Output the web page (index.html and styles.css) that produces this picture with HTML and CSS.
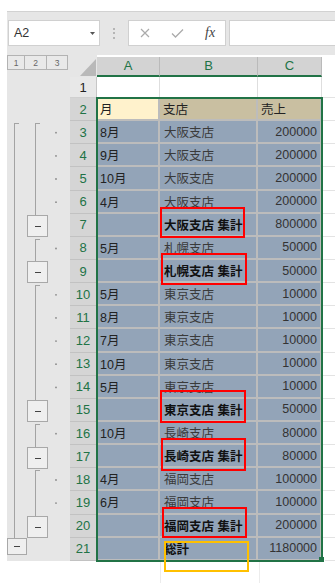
FILE: index.html
```html
<!DOCTYPE html>
<html lang="ja">
<head>
<meta charset="utf-8">
<title>Excel outline</title>
<link rel="stylesheet" href="styles.css">
</head>
<body>
<div class="window">
  <div class="fbar">
    <div class="namebox"><span>A2</span><svg class="caret" width="5" height="3" viewBox="0 0 5 3"><path d="M0 0H5L2.5 3Z" fill="#555"/></svg></div>
    <div class="grip"><i></i><i></i><i></i></div>
    <div class="fxbox">
      <svg class="ico-x" width="10" height="10" viewBox="0 0 10 10"><path d="M1 1L9 9M9 1L1 9" stroke="#ababab" stroke-width="1.2" fill="none"/></svg>
      <svg class="ico-ok" width="13" height="10" viewBox="0 0 13 10"><path d="M1 5.5L4.5 9L12 1.5" stroke="#ababab" stroke-width="1.3" fill="none"/></svg>
      <span class="fx">fx</span>
    </div>
    <div class="finput"></div>
  </div>
  <div class="sheet">
    <div class="outline">
      <div class="levels"><span class="lv1">1</span><span class="lv2">2</span><span class="lv3">3</span></div>
      <svg class="tree" width="63" height="484" viewBox="0 0 63 484">
        <g stroke="#a3a3a3" fill="none" shape-rendering="crispEdges">
          <path d="M12 46.5H7.5V462"/>
          <path d="M33 46.5H28.5V138.5"/>
          <path d="M33 162.5H28.5V184.5"/>
          <path d="M33 208.5H28.5V323.5"/>
          <path d="M33 347.5H28.5V370.5"/>
          <path d="M33 393.5H28.5V439.5"/>
        </g>
        <g fill="#efefef" stroke="#a8a8a8" shape-rendering="crispEdges">
          <rect x="0.5" y="461.5" width="19" height="16"/>
          <rect x="20.5" y="138.5" width="20" height="21"/>
          <rect x="20.5" y="184.5" width="20" height="21"/>
          <rect x="20.5" y="323.5" width="20" height="21"/>
          <rect x="20.5" y="370.5" width="20" height="21"/>
          <rect x="20.5" y="439.5" width="20" height="21"/>
        </g>
        <g stroke="#444" shape-rendering="crispEdges">
          <path d="M7 469.5H12.5"/>
          <path d="M28 149.5H33.5"/>
          <path d="M28 195.5H33.5"/>
          <path d="M28 334.5H33.5"/>
          <path d="M28 381.5H33.5"/>
          <path d="M28 450.5H33.5"/>
        </g>
        <g fill="#8a8a8a">
          <circle cx="49" cy="55.7" r="0.9"/>
          <circle cx="49" cy="78.9" r="0.9"/>
          <circle cx="49" cy="102" r="0.9"/>
          <circle cx="49" cy="125.2" r="0.9"/>
          <circle cx="49" cy="171.5" r="0.9"/>
          <circle cx="49" cy="217.8" r="0.9"/>
          <circle cx="49" cy="240.9" r="0.9"/>
          <circle cx="49" cy="264.1" r="0.9"/>
          <circle cx="49" cy="287.2" r="0.9"/>
          <circle cx="49" cy="310.4" r="0.9"/>
          <circle cx="49" cy="356.7" r="0.9"/>
          <circle cx="49" cy="403" r="0.9"/>
          <circle cx="49" cy="426.1" r="0.9"/>
        </g>
      </svg>
    </div>
    <div class="grid">
      <div class="corner"><svg width="27" height="22" viewBox="0 0 27 22"><path d="M26 4V21H10Z" fill="#b9b9b9"/></svg></div>
      <div class="ch">A</div><div class="ch">B</div><div class="ch">C</div><div class="chx"></div>

      <div class="rh">1</div><div class="c w"></div><div class="c w"></div><div class="c w"></div><div class="x"></div>

      <div class="rh on">2</div><div class="c s act">月</div><div class="c s hd">支店</div><div class="c s hd">売上</div><div class="x"></div>
      <div class="rh on">3</div><div class="c s">8月</div><div class="c s t">大阪支店</div><div class="c s n">200000</div><div class="x"></div>
      <div class="rh on">4</div><div class="c s">9月</div><div class="c s t">大阪支店</div><div class="c s n">200000</div><div class="x"></div>
      <div class="rh on">5</div><div class="c s">10月</div><div class="c s t">大阪支店</div><div class="c s n">200000</div><div class="x"></div>
      <div class="rh on">6</div><div class="c s">4月</div><div class="c s t">大阪支店</div><div class="c s n">200000</div><div class="x"></div>
      <div class="rh on">7</div><div class="c s"></div><div class="c s b m">大阪支店 集計<span class="mark mk7"></span></div><div class="c s n">800000</div><div class="x"></div>
      <div class="rh on">8</div><div class="c s">5月</div><div class="c s t">札幌支店</div><div class="c s n">50000</div><div class="x"></div>
      <div class="rh on">9</div><div class="c s"></div><div class="c s b m">札幌支店 集計<span class="mark mk9"></span></div><div class="c s n">50000</div><div class="x"></div>
      <div class="rh on">10</div><div class="c s">5月</div><div class="c s t">東京支店</div><div class="c s n">10000</div><div class="x"></div>
      <div class="rh on">11</div><div class="c s">8月</div><div class="c s t">東京支店</div><div class="c s n">10000</div><div class="x"></div>
      <div class="rh on">12</div><div class="c s">7月</div><div class="c s t">東京支店</div><div class="c s n">10000</div><div class="x"></div>
      <div class="rh on">13</div><div class="c s">10月</div><div class="c s t">東京支店</div><div class="c s n">10000</div><div class="x"></div>
      <div class="rh on">14</div><div class="c s">5月</div><div class="c s t">東京支店</div><div class="c s n">10000</div><div class="x"></div>
      <div class="rh on">15</div><div class="c s"></div><div class="c s b m">東京支店 集計<span class="mark mk15"></span></div><div class="c s n">50000</div><div class="x"></div>
      <div class="rh on">16</div><div class="c s">10月</div><div class="c s t">長崎支店</div><div class="c s n">80000</div><div class="x"></div>
      <div class="rh on">17</div><div class="c s"></div><div class="c s b m">長崎支店 集計<span class="mark mk17"></span></div><div class="c s n">80000</div><div class="x"></div>
      <div class="rh on">18</div><div class="c s">4月</div><div class="c s t">福岡支店</div><div class="c s n">100000</div><div class="x"></div>
      <div class="rh on">19</div><div class="c s">6月</div><div class="c s t">福岡支店</div><div class="c s n">100000</div><div class="x"></div>
      <div class="rh on">20</div><div class="c s"></div><div class="c s b m">福岡支店 集計<span class="mark mk20"></span></div><div class="c s n">200000</div><div class="x"></div>
      <div class="rh on">21</div><div class="c s"></div><div class="c s b m">総計<span class="mark total mk21"></span></div><div class="c s n">1180000</div><div class="x"></div>

      <div class="selection"><i class="handle"></i></div>
    </div>
  </div>
  <div class="below">
    <div class="bl-gap"></div>
    <div class="bl-a"></div>
    <div class="bl-b"></div>
    <div class="bl-c"></div>
  </div>
</div>
</body>
</html>
```

FILE: styles.css
```css
html, body {
  margin: 0;
  padding: 0;
  background: #fff;
}
body {
  min-height: 583px;
  font-family: "Liberation Sans", "Noto Sans CJK JP", sans-serif;
  color: #333;
}
.window {
  margin: 11px 0 0 7px;
  background: #e6e6e6;
}

/* formula bar */
.fbar {
  height: 44px;
  box-sizing: border-box;
  border-top: 1px solid #d2d2d2;
  padding-top: 8px;
  display: flex;
  align-items: flex-start;
}
.namebox {
  margin-left: 1px;
  width: 92px;
  height: 26px;
  box-sizing: border-box;
  background: #fff;
  border: 1px solid #d0d0d0;
  display: flex;
  align-items: center;
  justify-content: space-between;
  padding: 0 4px 0 5px;
  font-size: 12.5px;
  color: #333;
}
.caret { display: block; }
.grip {
  width: 28px;
  height: 26px;
  display: flex;
  flex-direction: column;
  align-items: center;
  justify-content: center;
  gap: 2.5px;
}
.grip i {
  display: block;
  width: 2px;
  height: 2px;
  background: #b5b5b5;
}
.fxbox {
  width: 98px;
  height: 26px;
  box-sizing: border-box;
  background: #fff;
  border: 1px solid #d0d0d0;
  display: flex;
  align-items: center;
  padding-left: 11px;
}
.fxbox svg { display: block; }
.ico-ok { margin-left: 21px; }
.fx {
  margin-left: 21px;
  font-family: "Liberation Serif", serif;
  font-style: italic;
  font-size: 14px;
  color: #444;
}
.finput {
  margin-left: 3px;
  flex: 1;
  height: 26px;
  box-sizing: border-box;
  background: #fff;
  border: 1px solid #d0d0d0;
  border-right: none;
}

/* sheet */
.sheet {
  display: flex;
}
.outline {
  width: 63px;
  flex-shrink: 0;
}
.levels {
  height: 22px;
  display: flex;
  align-items: flex-start;
}
.levels span {
  height: 15px;
  box-sizing: border-box;
  border: 1px solid #b3b3b3;
  display: flex;
  align-items: center;
  justify-content: center;
  font-size: 8.5px;
  color: #666;
  background: #e9e9e9;
}
.lv1 { width: 18px; }
.lv2 { width: 23px; margin-left: -1px; }
.lv3 { width: 22px; margin-left: -1px; }
.tree { display: block; }

.grid {
  flex: 1;
  position: relative;
  display: grid;
  grid-template-columns: 27px 63px 98px 64px 13px;
  grid-template-rows: 22px 21px repeat(20, 23.15px);
  background: #fff;
  font-size: 12.5px;
}
.corner {
  background: #e6e6e6;
}
.corner svg { display: block; }
.ch {
  margin-top: 2px;
  background: #d3d3d3;
  border-right: 1px solid #bababa;
  border-bottom: 2px solid #217346;
  display: flex;
  align-items: center;
  justify-content: center;
  padding-bottom: 2px;
  color: #217346;
  font-size: 13px;
}
.chx { background: #fff; }

.rh {
  background: #e8e8e8;
  border-right: 1px solid #c6c6c6;
  border-bottom: 1px solid #d0d0d0;
  display: flex;
  align-items: center;
  justify-content: center;
  font-size: 13px;
  color: #222;
}
.rh.on {
  background: #d5d5d5;
  border-bottom-color: #c2c2c2;
  color: #217346;
}

.c {
  display: flex;
  align-items: center;
  padding: 0 3px;
  white-space: nowrap;
  color: #222;
}
.c.w {
  border-right: 1px solid #dedede;
}
.c.s {
  background: #93a4b8;
  border-right: 2px solid #bcbcbc;
  border-bottom: 2px solid #bcbcbc;
}
.c.act { background: #fff2cc; }
.c.hd { background: #c9bfa1; }
.c.t { color: #3a3a3a; padding-left: 4px; }
.c.b { font-weight: bold; color: #111; padding-left: 4px; }
.c.n { justify-content: flex-end; color: #333; }
.x {
  border-bottom: 1px solid #e3e3e3;
}

/* strip under the sheet (white, faint gridlines) */
.below {
  height: 22px;
  display: flex;
  background: #fff;
}
.bl-gap { width: 90px; }
.bl-a { width: 63px; border-right: 1px solid #ececec; }
.bl-b { width: 98px; border-right: 1px solid #ececec; }
.bl-c { width: 64px; }

/* annotation boxes */
.c.m { position: relative; }
.mark {
  position: absolute;
  box-sizing: border-box;
  width: 85px;
  height: 31px;
  border: 2px solid #ff0000;
  z-index: 3;
}
.mk7 { top: -7px; left: 0; }
.mk9 { top: -7px; left: 1px; width: 86px; height: 32px; }
.mk15 { top: -9px; left: 0; width: 86px; height: 33px; }
.mk17 { top: -7px; left: 1px; height: 33px; }
.mk20 { top: -8px; left: 2px; }
.mark.total {
  border-color: #ffc000;
}
.mk21 { top: 3px; left: 4px; }

/* selection (overlay on the grid area A2:C21) */
.selection {
  position: absolute;
  grid-column: 2 / 5;
  grid-row: 3 / 23;
  top: -1px;
  left: -1px;
  right: -1px;
  bottom: -1px;
  border: 2px solid #217346;
  z-index: 2;
  pointer-events: none;
}
.handle {
  position: absolute;
  right: -4px;
  bottom: -3px;
  width: 5px;
  height: 5px;
  background: #217346;
  border: 1px solid #fff;
  border-left: none;
  border-top: none;
}
```
